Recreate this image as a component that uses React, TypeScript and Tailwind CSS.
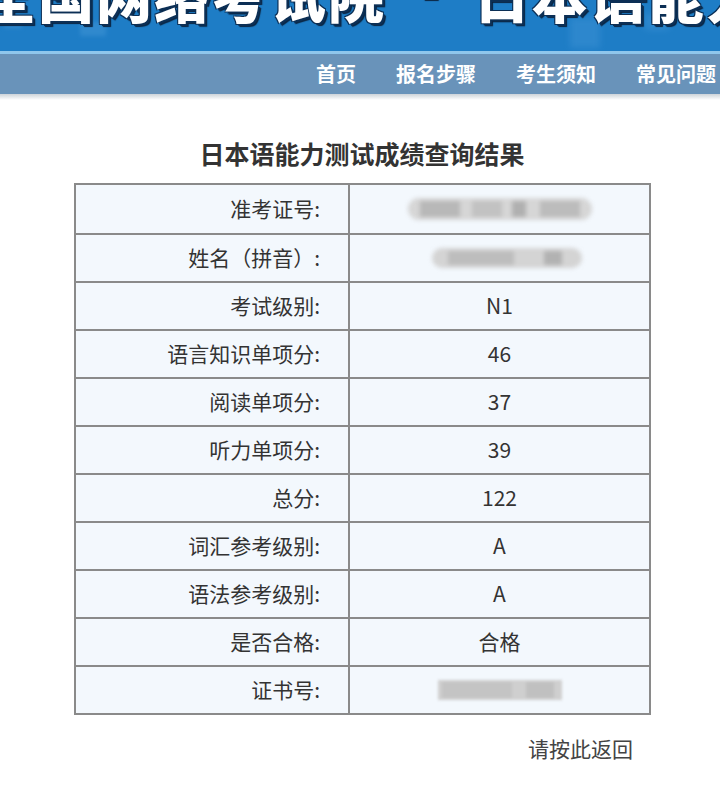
import React from "react";

const rows: { label: string; value?: string; blur?: "a" | "b" | "c" }[] = [
  { label: "准考证号:", blur: "a" },
  { label: "姓名（拼音）:", blur: "b" },
  { label: "考试级别:", value: "N1" },
  { label: "语言知识单项分:", value: "46" },
  { label: "阅读单项分:", value: "37" },
  { label: "听力单项分:", value: "39" },
  { label: "总分:", value: "122" },
  { label: "词汇参考级别:", value: "A" },
  { label: "语法参考级别:", value: "A" },
  { label: "是否合格:", value: "合格" },
  { label: "证书号:", blur: "c" },
];

function Blur({ kind }: { kind: "a" | "b" | "c" }) {
  if (kind === "a")
    return (
      <div className="flex h-[22px] w-[184px] items-center rounded-full bg-[#d6d6d6] blur-[2px]">
        <div className="ml-[12px] h-[16px] w-[40px] bg-[#b8b8b8]" />
        <div className="ml-[12px] h-[16px] w-[30px] bg-[#c2c2c2]" />
        <div className="ml-[10px] h-[16px] w-[14px] bg-[#b0b0b0]" />
        <div className="ml-[14px] h-[16px] w-[40px] bg-[#bcbcbc]" />
      </div>
    );
  if (kind === "b")
    return (
      <div className="ml-[14px] flex h-[20px] w-[150px] items-center rounded-full bg-[#d4d4d4] blur-[2px]">
        <div className="ml-[16px] h-[14px] w-[66px] bg-[#bdbdbd]" />
        <div className="ml-[30px] h-[14px] w-[18px] bg-[#b2b2b2]" />
      </div>
    );
  return (
    <div className="flex h-[20px] w-[124px] items-center bg-[#cfcfcf] blur-[1.5px]">
      <div className="ml-[4px] h-[16px] w-[70px] bg-[#c4c4c4]" />
      <div className="ml-[14px] h-[16px] w-[28px] bg-[#c0c0c0]" />
    </div>
  );
}

export default function App() {
  return (
    <div
      className="min-h-[798px] w-[720px] overflow-hidden bg-white"
      style={{ fontFamily: '"Noto Sans CJK SC", "Noto Sans", sans-serif' }}
    >
      {/* banner */}
      <div className="relative h-[51px] overflow-hidden bg-[#1e7dc6]">
        <div className="absolute left-[80px] top-[22px] h-[14px] w-[26px] bg-[#3d92d4] opacity-60 blur-[2px]" />
        <div className="absolute left-[4px] top-[18px] h-[10px] w-[18px] bg-[#3d92d4] opacity-60 blur-[2px]" />
        <div className="absolute left-[570px] top-[18px] h-[30px] w-[30px] bg-[#3d92d4] opacity-50 blur-[3px]" />
        <div className="absolute left-[645px] top-[14px] h-[16px] w-[24px] bg-[#3d92d4] opacity-50 blur-[3px]" />
        <div
          className="absolute left-[-20px] top-[-34px] whitespace-nowrap text-[56px] font-black leading-none tracking-[2px] text-white"
          style={{
            textShadow:
              "2px 2px 0 #0c2f55, -1px -1px 0 #0c2f55, 1px -1px 0 #0c2f55, -1px 1px 0 #0c2f55, 3px 3px 1px #0a2440",
          }}
        >
          全国网络考试院 ‐ 日本语能力测试报名
        </div>
      </div>
      <div className="h-[3px] bg-[#8fc6ec]" />
      {/* nav */}
      <div className="flex h-[40px] items-center justify-end gap-[40px] bg-[#6993ba] pr-[4px] text-[20px] font-bold text-white">
        <span>首页</span>
        <span>报名步骤</span>
        <span>考生须知</span>
        <span>常见问题</span>
      </div>
      <div className="h-[6px] bg-gradient-to-b from-[#cdd3d9] to-white" />

      {/* title */}
      <div className="mt-[37px] pl-[4px] text-center text-[25px] font-bold leading-[32px] text-[#333]">
        日本语能力测试成绩查询结果
      </div>

      {/* table */}
      <div className="ml-[74px] mr-[69px] mt-[14px] border-2 border-[#8a8a8a] bg-[#f3f8fd]">
        {rows.map((r, i) => (
          <div
            key={i}
            className={`grid h-[48px] grid-cols-[274px_1fr] ${i > 0 ? "border-t-2 border-[#8a8a8a]" : ""}`}
          >
            <div className="flex items-center justify-end border-r-2 border-[#8a8a8a] pr-[28px] text-[21px] text-[#333]">
              {r.label}
            </div>
            <div className="flex items-center justify-center text-[21px] text-[#333]">
              {r.blur ? <Blur kind={r.blur} /> : r.value}
            </div>
          </div>
        ))}
      </div>

      <div className="mr-[87px] mt-[18px] text-right text-[21px] text-[#444]">请按此返回</div>
    </div>
  );
}
